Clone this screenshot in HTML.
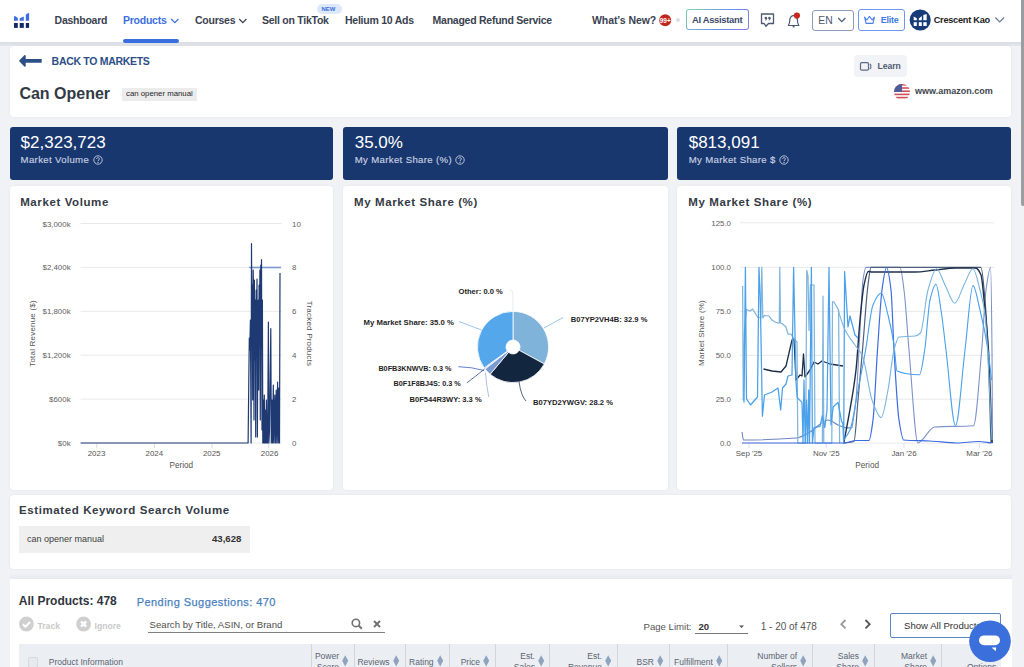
<!DOCTYPE html>
<html><head><meta charset="utf-8">
<style>
*{box-sizing:border-box;margin:0;padding:0}
html,body{width:1024px;height:667px;overflow:hidden;background:#f0f2f6;font-family:"Liberation Sans",sans-serif;color:#333}
.t{position:absolute;white-space:nowrap;line-height:1}
.b{font-weight:bold}
.abs{position:absolute}
.card{position:absolute;background:#fff;border-radius:4px;box-shadow:0 0 3px rgba(0,0,0,0.06)}
.kpi{position:absolute;background:#18376f;border-radius:3px;top:127px;height:52.5px}
.nav{color:#3a4250;font-size:10.5px;font-weight:bold;letter-spacing:-0.25px;top:15px}
.kv{color:#fff;font-size:17px;top:134px}
.kl{color:#c9d1e2;font-size:9.6px;top:155.2px;letter-spacing:0.35px;-webkit-text-stroke:0.15px #c9d1e2}
.ct{color:#353b45;font-size:11.5px;font-weight:bold;top:197.2px;letter-spacing:0.6px}
.ax{color:#666;font-size:7.5px}
.pl{color:#1e1e1e;font-size:7px;font-weight:bold}
.th{color:#5b6370;font-size:8.5px;top:657px}
</style></head><body>

<!-- NAV -->
<div class="abs" style="left:0;top:0;width:1021px;height:42px;background:#fff"></div>
<div class="abs" style="left:0;top:42px;width:1021px;height:4px;background:linear-gradient(#d9dde4,#e4e7ec)"></div>
<div class="abs" style="left:1021px;top:0;width:3px;height:205.5px;background:#9a9da2;border-bottom-left-radius:2px"></div>

<!-- logo -->
<svg class="abs" style="left:0;top:0" width="40" height="40">
<path d="M14 16.2 L15.5 16.2 L17.8 18 L17.8 20.8 L14 20.8Z" fill="#3f6de0"/>
<path d="M19.7 18.3 L23.8 16.4 L23.8 20.8 L19.7 20.8Z" fill="#3f6de0"/>
<path d="M25.8 14.5 L28.4 13 L29.1 13.2 L29.1 20.8 L25.8 20.8Z" fill="#3f6de0"/>
<rect x="14" y="23" width="3.8" height="4.9" fill="#0f2a66"/>
<rect x="19.7" y="23" width="4.1" height="4.9" fill="#0f2a66"/>
<rect x="25.8" y="23" width="3.3" height="4.9" fill="#0f2a66"/>
</svg>

<div class="t nav" style="left:54.6px">Dashboard</div>
<div class="t nav" style="left:123px;color:#3b6fe0">Products</div>
<svg class="abs" style="left:170px;top:17px" width="10" height="8"><path d="M1.2 2 L4.8 5.6 L8.4 2" stroke="#3b6fe0" stroke-width="1.2" fill="none"/></svg>
<div class="abs" style="left:123px;top:39px;width:55.7px;height:3.6px;background:#3b6fe0;border-radius:2px"></div>
<div class="t nav" style="left:195px">Courses</div>
<svg class="abs" style="left:238px;top:17px" width="10" height="8"><path d="M1.2 2 L4.8 5.6 L8.4 2" stroke="#39414e" stroke-width="1.2" fill="none"/></svg>
<div class="t nav" style="left:262px">Sell on TikTok</div>
<div class="abs" style="left:316.7px;top:3.9px;width:25px;height:10.1px;background:#dde9fb;border-radius:5px"></div>
<div class="t b" style="left:321.5px;top:5.6px;font-size:6px;color:#3c6fd8">NEW</div>
<div class="t nav" style="left:345px">Helium 10 Ads</div>
<div class="t nav" style="left:432.6px">Managed Refund Service</div>
<div class="t nav" style="left:592px;letter-spacing:-0.08px">What’s New?</div>
<svg class="abs" style="left:658px;top:13px" width="15" height="15"><circle cx="7.2" cy="7.2" r="6" fill="#c0281e"/><text x="7.2" y="7.4" font-family="Liberation Sans, sans-serif" font-size="7.6" font-weight="bold" fill="#fff" text-anchor="middle" dominant-baseline="central" textLength="11" lengthAdjust="spacingAndGlyphs">99+</text></svg>
<div class="abs" style="left:676.4px;top:18px;width:4px;height:4px;background:#d8dde6;border-radius:50%"></div>
<div class="abs" style="left:686px;top:9.4px;width:62.7px;height:21.1px;border-radius:3px;background:linear-gradient(135deg,#7fd3b0,#6a8cf0 60%,#8a7af0);padding:1px">
  <div style="width:100%;height:100%;background:#fff;border-radius:2px"></div></div>
<div class="t b" style="left:692px;top:14.7px;font-size:9.4px;color:#3b4a6b;letter-spacing:-0.3px">AI Assistant</div>

<!-- chat icon -->
<svg class="abs" style="left:758px;top:11px" width="20" height="20">
<path d="M3.5 3 H15.5 V12.5 H10.5 L8 15.3 L6.2 12.5 H3.5 Z" stroke="#4c5870" stroke-width="1.3" fill="none" stroke-linejoin="round"/>
<circle cx="7.9" cy="7.1" r="1.25" fill="#4c5870"/><circle cx="11.4" cy="7.1" r="1.25" fill="#4c5870"/><path d="M8.9 7.3 L7.6 9.4 M12.4 7.3 L11.1 9.4" stroke="#4c5870" stroke-width="1"/>
</svg>
<!-- bell -->
<svg class="abs" style="left:785px;top:11px" width="18" height="18">
<path d="M3.3 14.5 C4.5 13 4.8 11.5 4.8 9 C4.8 6.3 6.5 4.6 8.6 4.6 C10.7 4.6 12.4 6.3 12.4 9 C12.4 11.5 12.7 13 13.9 14.5 Z" stroke="#4c5870" stroke-width="1.2" fill="none" stroke-linejoin="round"/>
<path d="M7.6 15.7 h2" stroke="#4c5870" stroke-width="1.3"/>
<circle cx="11.9" cy="4.6" r="3.1" fill="#c8281e"/>
</svg>
<!-- EN -->
<div class="abs" style="left:812px;top:9.5px;width:41.7px;height:21.2px;border:1px solid #8e9db6;border-radius:3px"></div>
<div class="t" style="left:818.3px;top:15.5px;font-size:10.3px;color:#4c5870">EN</div>
<svg class="abs" style="left:837px;top:16px" width="10" height="8"><path d="M1.2 2 L4.8 5.6 L8.4 2" stroke="#4c5870" stroke-width="1.2" fill="none"/></svg>
<!-- Elite -->
<div class="abs" style="left:858.4px;top:9.4px;width:46.3px;height:21.6px;border:1px solid #6b97f0;border-radius:3px"></div>
<svg class="abs" style="left:863px;top:13px" width="14" height="14">
<path d="M1.6 4.1 L3.8 7 L6.5 3.4 L9.2 7 L11.4 4.1 L10 10.4 H3 Z" stroke="#4a7fea" stroke-width="1.1" fill="none" stroke-linejoin="round"/>
</svg>
<div class="t b" style="left:880.8px;top:16.4px;font-size:8.8px;color:#3d78e8;letter-spacing:-0.2px">Elite</div>
<!-- avatar -->
<svg class="abs" style="left:909px;top:9px" width="23" height="23">
<circle cx="11.2" cy="10.95" r="10.55" fill="#173a78"/>
<path d="M4.7 7.6 L7.8 9.25 V11.2 H4.7Z M9.8 9.4 L12.8 7.1 V11.2 H9.8Z M14.3 6 L17.7 4.9 V11.2 H14.3Z" fill="#fff"/>
<rect x="4.7" y="13.2" width="3.1" height="3.8" fill="#fff"/><rect x="9.8" y="13.2" width="3" height="3.8" fill="#fff"/><rect x="14.3" y="13.2" width="3.4" height="3.8" fill="#fff"/>
</svg>
<div class="t b" style="left:933.7px;top:16.1px;font-size:9.2px;color:#222;letter-spacing:-0.25px">Crescent Kao</div>
<svg class="abs" style="left:994px;top:15px" width="12" height="9"><path d="M1.3 2.5 L5.7 7 L10.1 2.5" stroke="#6a7890" stroke-width="1.2" fill="none"/></svg>

<!-- HEADER CARD -->
<div class="card" style="left:10px;top:46px;width:1001px;height:70.5px"></div>
<svg class="abs" style="left:16px;top:52px" width="30" height="18">
<path d="M4.0 8.9 L8.9 3.9 L8.9 13.9 Z" fill="#2c4f86" stroke="#2c4f86" stroke-width="1.6" stroke-linejoin="round"/><rect x="8.5" y="6.95" width="17.2" height="3.8" rx="0.6" fill="#2c4f86"/>
</svg>
<div class="t b" style="left:51.6px;top:56px;font-size:10.5px;color:#2c4f86;letter-spacing:-0.3px">BACK TO MARKETS</div>
<div class="t b" style="left:19.4px;top:85.5px;font-size:16px;color:#333a45;letter-spacing:0px;margin-top:0.5px">Can Opener</div>
<div class="abs" style="left:121.7px;top:88px;width:75.8px;height:12.8px;background:#ececec;border-radius:1px"></div>
<div class="t" style="left:126px;top:89.9px;font-size:7.8px;color:#1e1e1e;letter-spacing:0px">can opener manual</div>
<!-- learn -->
<div class="abs" style="left:854px;top:55px;width:52.6px;height:21.6px;background:#f1f3f6;border-radius:4px"></div>
<svg class="abs" style="left:858px;top:60px" width="16" height="12">
<rect x="2.5" y="2.7" width="8" height="7.4" rx="1.2" stroke="#5d6b84" stroke-width="1.2" fill="none"/>
<path d="M11.6 4 C12.6 4 12.8 4.4 12.8 5 V7.8 C12.8 8.4 12.6 8.8 11.6 8.8" stroke="#5d6b84" stroke-width="1.1" fill="none"/>
</svg>
<div class="t b" style="left:877.4px;top:62px;font-size:8.6px;color:#4f5b72">Learn</div>
<!-- flag -->
<svg class="abs" style="left:893px;top:82.5px" width="18" height="18">
<defs><clipPath id="fc"><circle cx="9" cy="9" r="8"/></clipPath></defs>
<g clip-path="url(#fc)">
<rect width="18" height="18" fill="#fff"/>
<rect y="1" width="18" height="1.6" fill="#d0505a"/><rect y="4.2" width="18" height="1.6" fill="#d0505a"/><rect y="7.4" width="18" height="1.6" fill="#d0505a"/><rect y="10.6" width="18" height="1.6" fill="#d0505a"/><rect y="13.8" width="18" height="1.6" fill="#d0505a"/><rect y="17" width="18" height="1.6" fill="#d0505a"/>
<rect width="9" height="9" fill="#505c98"/>
</g></svg>
<div class="t b" style="left:915px;top:87.1px;font-size:9px;color:#41464f;letter-spacing:0px">www.amazon.com</div>

<!-- KPI -->
<div class="kpi" style="left:10px;width:323px"></div>
<div class="kpi" style="left:343px;width:324.5px"></div>
<div class="kpi" style="left:677px;width:334px"></div>
<div class="t kv" style="left:20.6px">$2,323,723</div>
<div class="t kl" style="left:20.6px">Market Volume</div>
<div class="t kv" style="left:354.7px">35.0%</div>
<div class="t kl" style="left:354.7px">My Market Share (%)</div>
<div class="t kv" style="left:688.7px">$813,091</div>
<div class="t kl" style="left:688.7px">My Market Share $</div>
<svg class="abs" style="left:93px;top:154.5px" width="10" height="10"><circle cx="5" cy="5" r="4.2" stroke="#c6cee0" stroke-width="0.9" fill="none"/><path d="M3.6 4 C3.6 2.2 6.4 2.2 6.4 3.9 C6.4 5 5 5 5 6.1" stroke="#c6cee0" stroke-width="0.9" fill="none"/><circle cx="5" cy="7.4" r="0.55" fill="#c6cee0"/></svg><svg class="abs" style="left:455.2px;top:154.5px" width="10" height="10"><circle cx="5" cy="5" r="4.2" stroke="#c6cee0" stroke-width="0.9" fill="none"/><path d="M3.6 4 C3.6 2.2 6.4 2.2 6.4 3.9 C6.4 5 5 5 5 6.1" stroke="#c6cee0" stroke-width="0.9" fill="none"/><circle cx="5" cy="7.4" r="0.55" fill="#c6cee0"/></svg><svg class="abs" style="left:779.4px;top:154.5px" width="10" height="10"><circle cx="5" cy="5" r="4.2" stroke="#c6cee0" stroke-width="0.9" fill="none"/><path d="M3.6 4 C3.6 2.2 6.4 2.2 6.4 3.9 C6.4 5 5 5 5 6.1" stroke="#c6cee0" stroke-width="0.9" fill="none"/><circle cx="5" cy="7.4" r="0.55" fill="#c6cee0"/></svg>

<!-- CHART CARDS -->
<div class="card" style="left:10px;top:186px;width:323px;height:304px"></div>
<div class="card" style="left:343px;top:186px;width:324.5px;height:304px"></div>
<div class="card" style="left:677px;top:186px;width:334px;height:304px"></div>
<div class="t ct" style="left:20.2px">Market Volume</div>
<div class="t ct" style="left:354px">My Market Share (%)</div>
<div class="t ct" style="left:688.3px">My Market Share (%)</div>

<!--CHARTS--><svg class="abs" style="left:0;top:0" width="1024" height="667" font-family="Liberation Sans, sans-serif"><line x1="80.6" x2="281.6" y1="223.5" y2="223.5" stroke="#e9e9e9" stroke-width="1"/><line x1="80.6" x2="281.6" y1="267.4" y2="267.4" stroke="#e9e9e9" stroke-width="1"/><line x1="80.6" x2="281.6" y1="311.3" y2="311.3" stroke="#e9e9e9" stroke-width="1"/><line x1="80.6" x2="281.6" y1="355.2" y2="355.2" stroke="#e9e9e9" stroke-width="1"/><line x1="80.6" x2="281.6" y1="399.1" y2="399.1" stroke="#e9e9e9" stroke-width="1"/><line x1="80.6" x2="281.6" y1="443" y2="443" stroke="#e9e9e9" stroke-width="1"/><line x1="96.8" x2="96.8" y1="443" y2="448" stroke="#d8dce6"/><line x1="154.3" x2="154.3" y1="443" y2="448" stroke="#d8dce6"/><line x1="212" x2="212" y1="443" y2="448" stroke="#d8dce6"/><line x1="268.7" x2="268.7" y1="443" y2="448" stroke="#d8dce6"/><polyline points="249.20,267.50 281.00,267.50" fill="none" stroke="#7b9bd0" stroke-width="1.6" stroke-linejoin="round" opacity="1"/><polyline points="80.60,443.00 248.10,443.00 248.80,380.00 249.30,338.00 249.80,350.00 250.40,320.00 251.10,443.00 251.50,243.60 251.90,330.00 252.30,285.00 252.70,400.00 253.20,270.00 253.60,300.00 254.00,420.00 254.40,280.00 254.90,360.00 255.30,300.00 255.70,437.00 256.20,290.00 256.60,350.00 257.00,279.00 257.40,437.00 257.80,330.00 258.30,300.00 258.70,390.00 259.10,285.00 259.50,340.00 259.90,270.00 260.30,420.00 260.80,265.00 261.20,300.00 261.50,259.60 262.00,430.00 262.40,300.00 262.80,443.00 263.30,400.00 263.80,443.00 264.30,395.00 264.80,443.00 265.30,410.00 265.80,443.00 266.40,400.00 266.90,443.00 267.60,443.00 268.40,322.00 268.90,443.00 269.50,430.00 270.80,328.50 271.30,443.00 272.00,400.00 272.60,443.00 273.30,385.00 273.90,443.00 274.80,395.00 275.40,443.00 276.20,390.00 276.80,443.00 277.60,382.00 278.20,443.00 278.90,388.00 279.50,443.00 280.00,273.00" fill="none" stroke="#1f3a73" stroke-width="1.2" stroke-linejoin="round" opacity="1"/><path d="M513.00,311.40 A35.6,35.6 0 0 1 544.30,363.95 L519.16,350.33 A7,7 0 0 0 513.00,340.00Z" fill="#7fb3d9" stroke="#fff" stroke-width="0.8"/><path d="M544.30,363.95 A35.6,35.6 0 0 1 490.14,374.29 L508.50,352.37 A7,7 0 0 0 519.16,350.33Z" fill="#12263f" stroke="#fff" stroke-width="0.8"/><path d="M490.14,374.29 A35.6,35.6 0 0 1 485.01,369.00 L507.50,351.33 A7,7 0 0 0 508.50,352.37Z" fill="#7d9bd3" stroke="#fff" stroke-width="0.8"/><path d="M485.01,369.00 A35.6,35.6 0 0 1 484.60,368.46 L507.42,351.22 A7,7 0 0 0 507.50,351.33Z" fill="#4a6fc0" stroke="#fff" stroke-width="0.8"/><path d="M484.60,368.46 A35.6,35.6 0 0 1 484.20,367.93 L507.34,351.11 A7,7 0 0 0 507.42,351.22Z" fill="#2f57a8" stroke="#fff" stroke-width="0.8"/><path d="M484.20,367.93 A35.6,35.6 0 0 1 513.00,311.40 L513.00,340.00 A7,7 0 0 0 507.34,351.11Z" fill="#55a7ec" stroke="#fff" stroke-width="0.8"/><path d="M513,311 L513,294 Q513,290 510,290" stroke="#e2e6ec" stroke-width="0.8" fill="none"/><path d="M481.5,330 L459,321.5" stroke="#7fb6ea" stroke-width="0.8" fill="none"/><path d="M544,328 L563,317.5" stroke="#7fb6dc" stroke-width="0.8" fill="none"/><path d="M458.3,366.7 Q472,367 484,370.5" stroke="#3a63c0" stroke-width="0.8" fill="none"/><path d="M466.9,382.8 Q476,376 484.5,369" stroke="#2f4f90" stroke-width="0.8" fill="none"/><path d="M488.8,397.2 Q486,383 485.5,372.5" stroke="#9ab0dc" stroke-width="0.8" fill="none"/><path d="M519,381.5 Q521,396 526,401" stroke="#2a3f5e" stroke-width="0.8" fill="none"/><line x1="740" x2="994" y1="222.8" y2="222.8" stroke="#e9e9e9" stroke-width="1"/><line x1="740" x2="994" y1="267.3" y2="267.3" stroke="#e9e9e9" stroke-width="1"/><line x1="740" x2="994" y1="311.4" y2="311.4" stroke="#e9e9e9" stroke-width="1"/><line x1="740" x2="994" y1="355.3" y2="355.3" stroke="#e9e9e9" stroke-width="1"/><line x1="740" x2="994" y1="399.2" y2="399.2" stroke="#e9e9e9" stroke-width="1"/><line x1="740" x2="994" y1="443.2" y2="443.2" stroke="#e9e9e9" stroke-width="1"/><line x1="749" x2="749" y1="443" y2="448" stroke="#dde"/><line x1="826.3" x2="826.3" y1="443" y2="448" stroke="#dde"/><line x1="904" x2="904" y1="443" y2="448" stroke="#dde"/><line x1="979.4" x2="979.4" y1="443" y2="448" stroke="#dde"/><path d="M742.00,432.00 C742.50,434.67 743.00,440.00 743.50,440.00 C761.00,440.00 778.50,439.46 796.00,438.00 C800.67,437.61 805.33,434.41 810.00,432.00 C816.00,428.90 822.00,420.00 828.00,420.00 C831.33,420.00 834.67,423.59 838.00,425.00 C840.33,425.99 842.67,427.37 845.00,427.60 C847.33,427.83 849.67,427.87 852.00,428.00" fill="none" stroke="#6d87c0" stroke-width="1.1" opacity="1" stroke-linejoin="round"/><path d="M852.00,428.00 C853.33,418.67 854.67,413.33 856.00,400.00 C857.33,386.67 858.67,352.74 860.00,330.00 C861.00,312.95 862.00,286.71 863.00,280.00 C864.00,273.29 865.00,267.40 866.00,267.40 C877.33,267.40 888.67,267.40 900.00,267.40 C901.33,267.40 902.67,279.89 904.00,290.00 C905.67,302.64 907.33,331.36 909.00,350.00 C912.00,383.55 915.00,443.00 918.00,443.00 C919.33,443.00 920.67,441.13 922.00,440.00 C926.17,436.47 930.33,427.32 934.50,427.00 C947.50,426.00 960.50,426.80 973.50,425.70 C976.23,425.47 978.97,381.03 981.70,350.00 C983.13,333.73 984.57,300.47 986.00,290.00 C987.53,278.80 989.07,267.40 990.60,267.40 C991.07,267.40 991.53,304.47 992.00,350.00 C992.17,366.26 992.33,412.00 992.50,443.00" fill="none" stroke="#7d93c8" stroke-width="1.1" opacity="1" stroke-linejoin="round"/><path d="M843.00,443.00 C846.67,442.50 850.33,442.66 854.00,441.50 C855.33,441.08 856.67,414.30 858.00,400.00 C859.50,383.92 861.00,367.16 862.50,350.00 C864.33,329.02 866.17,298.92 868.00,285.00 C869.00,277.41 870.00,267.40 871.00,267.40 C907.67,267.40 944.33,267.40 981.00,267.40 C982.33,267.40 983.67,285.16 985.00,300.00 C986.00,311.13 987.00,328.32 988.00,350.00 C989.00,371.68 990.00,412.00 991.00,443.00" fill="none" stroke="#4d5f7e" stroke-width="1.2" opacity="1" stroke-linejoin="round"/><path d="M843.80,443.00 C845.20,435.47 846.60,428.46 848.00,420.40 C850.67,405.05 853.33,393.19 856.00,370.00 C857.33,358.40 858.67,333.73 860.00,320.00 C861.33,306.27 862.67,291.20 864.00,285.00 C865.43,278.34 866.87,271.50 868.30,271.50 C869.53,271.50 870.77,272.00 872.00,272.00 C886.33,272.00 900.67,272.00 915.00,272.00 C921.67,272.00 928.33,270.66 935.00,270.00 C941.83,269.33 948.67,268.00 955.50,268.00 C962.23,268.00 968.97,268.00 975.70,268.00 C977.47,268.00 979.23,270.80 981.00,275.00 C982.33,278.17 983.67,296.75 985.00,310.00 C986.17,321.60 987.33,331.35 988.50,350.00 C989.67,368.65 990.83,412.00 992.00,443.00" fill="none" stroke="#1e3049" stroke-width="1.4" opacity="1" stroke-linejoin="round"/><polyline points="763.50,369.00 772.00,371.00 781.00,372.00 786.00,366.00 792.00,340.00 794.00,339.00 796.00,380.00 800.00,375.00 802.00,376.00 803.50,354.00 805.00,377.00 810.00,370.00 814.00,362.00 818.00,364.00 822.00,361.00 830.00,364.00 843.00,366.00" fill="none" stroke="#1b2d48" stroke-width="1.3" stroke-linejoin="round" opacity="1"/><polyline points="742.60,286.00 743.30,400.00 744.50,330.00 746.50,309.50 750.00,311.00 752.50,309.00 757.60,317.00 760.80,318.00 761.80,267.40 762.80,318.00 764.50,315.50 769.00,316.00 772.00,320.00 775.00,322.00 778.00,323.00 779.30,323.00 779.80,267.40 780.50,323.00 782.00,323.50 786.00,327.00 788.00,334.00 791.00,334.00 794.00,339.00 797.00,342.00 797.80,443.00 805.60,443.00 806.80,270.40 808.00,276.00 809.00,330.40 810.40,284.80 814.00,285.00 815.00,443.00 822.40,443.00 823.00,296.20 823.80,443.00 831.80,443.00 832.50,301.60 834.00,302.00 838.60,310.00 839.60,443.00" fill="none" stroke="#7fb5de" stroke-width="1.25" stroke-linejoin="round" opacity="1"/><polyline points="744.00,402.50 745.40,267.40 746.50,398.80 750.50,405.00 754.00,401.00 757.50,397.00 759.00,267.40 760.30,300.00 762.40,416.20 764.50,395.00 772.00,392.00 778.00,388.00 780.70,410.00 782.50,388.00 786.00,384.00 788.00,376.00 792.00,375.00 793.60,267.40 796.00,382.00 797.20,397.60 802.00,402.40 803.00,443.00 804.00,380.00 805.20,443.00 806.50,400.00 807.60,443.00 808.70,390.00 809.50,443.00 811.40,267.40 812.40,443.00 814.00,427.60 820.00,426.40 822.40,415.60 824.80,427.60 827.00,410.00 829.00,267.40 831.00,425.00 833.20,407.00 838.00,402.40 841.60,421.60 842.80,423.00 843.70,443.00 844.60,271.60 848.00,327.00 850.00,316.00 855.00,335.00 858.00,338.00" fill="none" stroke="#4aa0ea" stroke-width="1.25" stroke-linejoin="round" opacity="1"/><path d="M742.00,443.00 C776.00,443.00 810.00,443.00 844.00,443.00 C848.00,443.00 852.00,440.50 856.00,440.50 C860.33,440.50 864.67,440.50 869.00,440.50 C870.33,440.50 871.67,430.18 873.00,420.00 C874.50,408.55 876.00,371.54 877.50,350.00 C879.00,328.46 880.50,300.91 882.00,290.00 C883.50,279.09 885.00,267.50 886.50,267.50 C888.00,267.50 889.50,277.50 891.00,290.00 C892.00,298.33 893.00,333.28 894.00,350.00 C895.67,377.86 897.33,409.18 899.00,420.00 C900.57,430.17 902.13,439.85 903.70,440.00 C912.47,440.86 921.23,440.56 930.00,441.00 C939.00,441.45 948.00,443.00 957.00,443.00 C964.00,443.00 971.00,441.50 978.00,441.50 C982.50,441.50 987.00,442.50 991.50,443.00" fill="none" stroke="#3c6be0" stroke-width="1.2" opacity="1" stroke-linejoin="round"/><path d="M843.70,440.00 C845.80,436.67 847.90,434.96 850.00,430.00 C852.67,423.70 855.33,403.68 858.00,390.00 C860.53,377.01 863.07,364.30 865.60,350.00 C868.07,336.08 870.53,310.88 873.00,305.00 C875.73,298.48 878.47,293.00 881.20,293.00 C883.47,293.00 885.73,306.06 888.00,315.00 C890.00,322.89 892.00,331.93 894.00,345.00 C895.00,351.54 896.00,370.57 897.00,371.00 C904.50,374.21 912.00,374.70 919.50,374.70 C921.23,374.70 922.97,360.94 924.70,350.00 C926.47,338.85 928.23,307.32 930.00,300.00 C932.00,291.71 934.00,284.30 936.00,284.30 C937.67,284.30 939.33,299.57 941.00,310.00 C942.67,320.43 944.33,336.69 946.00,350.00 C949.17,375.29 952.33,425.70 955.50,425.70 C958.67,425.70 961.83,375.37 965.00,350.00 C967.67,328.64 970.33,285.60 973.00,285.60 C975.33,285.60 977.67,300.45 980.00,310.00 C982.67,320.91 985.33,332.56 988.00,350.00 C989.17,357.63 990.33,370.00 991.50,380.00" fill="none" stroke="#4aa0ea" stroke-width="1.1" opacity="1" stroke-linejoin="round"/><path d="M838.00,310.00 C840.33,316.67 842.67,325.32 845.00,330.00 C848.33,336.68 851.67,340.06 855.00,345.00 C857.50,348.71 860.00,350.54 862.50,356.00 C865.67,362.91 868.83,391.48 872.00,400.00 C875.07,408.25 878.13,417.50 881.20,417.50 C883.47,417.50 885.73,401.47 888.00,390.00 C890.00,379.88 892.00,357.38 894.00,350.00 C895.67,343.85 897.33,337.24 899.00,337.00 C904.33,336.22 909.67,336.69 915.00,336.00 C916.80,335.77 918.60,334.74 920.40,333.00 C922.93,330.55 925.47,298.77 928.00,290.00 C930.87,280.08 933.73,268.80 936.60,268.80 C939.40,268.80 942.20,279.70 945.00,285.00 C948.27,291.18 951.53,303.20 954.80,303.20 C957.87,303.20 960.93,290.78 964.00,285.00 C967.00,279.35 970.00,268.80 973.00,268.80 C975.33,268.80 977.67,281.22 980.00,290.00 C981.67,296.27 983.33,301.76 985.00,314.00 C987.33,331.13 989.67,398.00 992.00,440.00" fill="none" stroke="#7ab5e0" stroke-width="1.1" opacity="1" stroke-linejoin="round"/><text x="70.6" y="224.0" font-size="7.9" fill="#606060" text-anchor="end" dominant-baseline="central" font-weight="normal" >$3,000k</text><text x="70.6" y="267.9" font-size="7.9" fill="#606060" text-anchor="end" dominant-baseline="central" font-weight="normal" >$2,400k</text><text x="70.6" y="311.8" font-size="7.9" fill="#606060" text-anchor="end" dominant-baseline="central" font-weight="normal" >$1,800k</text><text x="70.6" y="355.7" font-size="7.9" fill="#606060" text-anchor="end" dominant-baseline="central" font-weight="normal" >$1,200k</text><text x="70.6" y="399.6" font-size="7.9" fill="#606060" text-anchor="end" dominant-baseline="central" font-weight="normal" >$600k</text><text x="70.6" y="443.5" font-size="7.9" fill="#606060" text-anchor="end" dominant-baseline="central" font-weight="normal" >$0k</text><text x="292" y="224.0" font-size="7.9" fill="#606060" text-anchor="start" dominant-baseline="central" font-weight="normal" >10</text><text x="292" y="267.9" font-size="7.9" fill="#606060" text-anchor="start" dominant-baseline="central" font-weight="normal" >8</text><text x="292" y="311.8" font-size="7.9" fill="#606060" text-anchor="start" dominant-baseline="central" font-weight="normal" >6</text><text x="292" y="355.7" font-size="7.9" fill="#606060" text-anchor="start" dominant-baseline="central" font-weight="normal" >4</text><text x="292" y="399.6" font-size="7.9" fill="#606060" text-anchor="start" dominant-baseline="central" font-weight="normal" >2</text><text x="292" y="443.5" font-size="7.9" fill="#606060" text-anchor="start" dominant-baseline="central" font-weight="normal" >0</text><text x="96.5" y="453.8" font-size="7.9" fill="#555" text-anchor="middle" dominant-baseline="central" font-weight="normal" >2023</text><text x="154.3" y="453.8" font-size="7.9" fill="#555" text-anchor="middle" dominant-baseline="central" font-weight="normal" >2024</text><text x="211.7" y="453.8" font-size="7.9" fill="#555" text-anchor="middle" dominant-baseline="central" font-weight="normal" >2025</text><text x="269.6" y="453.8" font-size="7.9" fill="#555" text-anchor="middle" dominant-baseline="central" font-weight="normal" >2026</text><text x="181.3" y="465.6" font-size="8.2" fill="#555" text-anchor="middle" dominant-baseline="central" font-weight="normal" >Period</text><text x="0" y="0" font-size="8" fill="#555" letter-spacing="0.2" text-anchor="middle" dominant-baseline="central" transform="translate(32.6,333.5) rotate(-90)">Total Revenue ($)</text><text x="0" y="0" font-size="8" fill="#555" letter-spacing="0.2" text-anchor="middle" dominant-baseline="central" transform="translate(309.6,333.5) rotate(90)">Tracked Products</text><text x="502.8" y="291.8" font-size="7.6" fill="#1e1e1e" text-anchor="end" dominant-baseline="central" font-weight="bold"  textLength="44.3" lengthAdjust="spacingAndGlyphs">Other: 0.0 %</text><text x="453.8" y="322.4" font-size="7.6" fill="#1e1e1e" text-anchor="end" dominant-baseline="central" font-weight="bold"  textLength="90.2" lengthAdjust="spacingAndGlyphs">My Market Share: 35.0 %</text><text x="570.8" y="319.8" font-size="7.6" fill="#1e1e1e" text-anchor="start" dominant-baseline="central" font-weight="bold"  textLength="76.6" lengthAdjust="spacingAndGlyphs">B07YP2VH4B: 32.9 %</text><text x="451.5" y="368.2" font-size="7.6" fill="#1e1e1e" text-anchor="end" dominant-baseline="central" font-weight="bold"  textLength="73.1" lengthAdjust="spacingAndGlyphs">B0FB3KNWVB: 0.3 %</text><text x="460.7" y="383.2" font-size="7.6" fill="#1e1e1e" text-anchor="end" dominant-baseline="central" font-weight="bold"  textLength="67.1" lengthAdjust="spacingAndGlyphs">B0F1F8BJ4S: 0.3 %</text><text x="481.6" y="399.2" font-size="7.6" fill="#1e1e1e" text-anchor="end" dominant-baseline="central" font-weight="bold"  textLength="72.1" lengthAdjust="spacingAndGlyphs">B0F544R3WY: 3.3 %</text><text x="532.9" y="402.5" font-size="7.6" fill="#1e1e1e" text-anchor="start" dominant-baseline="central" font-weight="bold"  textLength="80.1" lengthAdjust="spacingAndGlyphs">B07YD2YWGV: 28.2 %</text><text x="731" y="223.3" font-size="7.9" fill="#606060" text-anchor="end" dominant-baseline="central" font-weight="normal" >125.0</text><text x="731" y="267.8" font-size="7.9" fill="#606060" text-anchor="end" dominant-baseline="central" font-weight="normal" >100.0</text><text x="731" y="311.9" font-size="7.9" fill="#606060" text-anchor="end" dominant-baseline="central" font-weight="normal" >75.0</text><text x="731" y="355.8" font-size="7.9" fill="#606060" text-anchor="end" dominant-baseline="central" font-weight="normal" >50.0</text><text x="731" y="399.7" font-size="7.9" fill="#606060" text-anchor="end" dominant-baseline="central" font-weight="normal" >25.0</text><text x="731" y="443.7" font-size="7.9" fill="#606060" text-anchor="end" dominant-baseline="central" font-weight="normal" >0.0</text><text x="749" y="453.8" font-size="7.9" fill="#555" text-anchor="middle" dominant-baseline="central" font-weight="normal" >Sep '25</text><text x="826.3" y="453.8" font-size="7.9" fill="#555" text-anchor="middle" dominant-baseline="central" font-weight="normal" >Nov '25</text><text x="904" y="453.8" font-size="7.9" fill="#555" text-anchor="middle" dominant-baseline="central" font-weight="normal" >Jan '26</text><text x="979.4" y="453.8" font-size="7.9" fill="#555" text-anchor="middle" dominant-baseline="central" font-weight="normal" >Mar '26</text><text x="867.2" y="465.4" font-size="8.2" fill="#555" text-anchor="middle" dominant-baseline="central" font-weight="normal" >Period</text><text x="0" y="0" font-size="8" fill="#555" letter-spacing="0.2" text-anchor="middle" dominant-baseline="central" transform="translate(701.7,333) rotate(-90)">Market Share (%)</text></svg><!--/CHARTS-->
<!-- KEYWORD CARD -->
<div class="card" style="left:10px;top:495px;width:1001px;height:73.5px"></div>
<div class="t ct" style="left:19px;top:504.6px">Estimated Keyword Search Volume</div>
<div class="abs" style="left:19px;top:526.4px;width:231px;height:26.6px;background:#efefef"></div>
<div class="t" style="left:27px;top:535.2px;font-size:9px;color:#3d3d3d">can opener manual</div>
<div class="t b" style="left:212px;top:534px;font-size:9.6px;color:#333">43,628</div>

<!-- PRODUCTS CARD -->
<div class="abs" style="left:9.5px;top:573px;width:1002px;height:6px;background:linear-gradient(rgba(0,0,0,0),rgba(30,40,60,0.045))"></div>
<div class="abs" style="left:9.5px;top:579px;width:1002px;height:100px;background:#fff"></div>
<div class="t b" style="left:18.75px;top:595px;font-size:12px;color:#30353d">All Products: 478</div>
<div class="t" style="left:136.7px;top:596.5px;font-size:11px;color:#4a7fc0;letter-spacing:0.45px;-webkit-text-stroke:0.25px #4a7fc0">Pending Suggestions: 470</div>


<!-- track / ignore -->
<svg class="abs" style="left:18px;top:616px" width="18" height="18"><circle cx="8.4" cy="8" r="7.4" fill="#cfcfcf"/><path d="M4.9 8.2 L7.5 10.8 L12 6" stroke="#fff" stroke-width="2" fill="none"/></svg>
<div class="t b" style="left:37.5px;top:621.8px;font-size:8.6px;color:#c9c9c9">Track</div>
<svg class="abs" style="left:75px;top:616px" width="18" height="18"><circle cx="8.6" cy="8" r="7.4" fill="#cfcfcf"/><path d="M6 5.4 L11.2 10.6 M11.2 5.4 L6 10.6" stroke="#fff" stroke-width="2.4" fill="none"/></svg>
<div class="t b" style="left:94.5px;top:621.8px;font-size:8.6px;color:#c9c9c9">Ignore</div>
<div class="t" style="left:149.6px;top:619.5px;font-size:9.6px;color:#4d4d4d">Search by Title, ASIN, or Brand</div>
<div class="abs" style="left:147.7px;top:632px;width:237px;height:1px;background:#808080"></div>
<svg class="abs" style="left:350px;top:617px" width="14" height="14"><circle cx="5.9" cy="5.9" r="3.7" stroke="#707070" stroke-width="1.6" fill="none"/><path d="M8.6 8.6 L11.8 11.8" stroke="#707070" stroke-width="2"/></svg>
<svg class="abs" style="left:372px;top:619px" width="10" height="10"><path d="M2 2 L8 8 M8 2 L2 8" stroke="#707070" stroke-width="1.9"/></svg>
<!-- pagination -->
<div class="t" style="left:643.5px;top:622px;font-size:9.6px;color:#555">Page Limit:</div>
<div class="t b" style="left:698.5px;top:622px;font-size:9.6px;color:#333">20</div>
<svg class="abs" style="left:738px;top:624px" width="8" height="6"><path d="M1 1.5 H6 L3.5 4Z" fill="#555"/></svg>
<div class="abs" style="left:695px;top:633px;width:52.5px;height:1px;background:#777"></div>
<div class="t" style="left:760.7px;top:622px;font-size:10px;color:#555">1 - 20 of 478</div>
<svg class="abs" style="left:836px;top:617px" width="14" height="14"><path d="M9.5 3 L5.3 7.2 L9.5 11.4" stroke="#999" stroke-width="1.8" fill="none"/></svg>
<svg class="abs" style="left:861px;top:617px" width="14" height="14"><path d="M4.5 3 L8.7 7.2 L4.5 11.4" stroke="#555" stroke-width="1.8" fill="none"/></svg>
<div class="abs" style="left:890px;top:613.3px;width:111.3px;height:24.4px;border:1px solid #5b87c5;border-radius:2px;background:#fff"></div>
<div class="t" style="left:904px;top:620.7px;font-size:9.6px;color:#333">Show All Products</div>
<!-- table header -->
<div class="abs" style="left:18.75px;top:644.3px;width:982.5px;height:30px;background:#ebeff4"></div>
<div class="abs" style="left:28px;top:656.7px;width:10px;height:11px;border:1px solid #d6dade;border-radius:2px;background:#e7eaee"></div>
<div class="t th" style="left:48.8px;top:658px">Product Information</div>
<div class="abs" style="left:310.5px;top:644.3px;width:1px;height:30px;background:#d2d6dc"></div>
<div class="abs" style="left:353.6px;top:644.3px;width:1px;height:30px;background:#d2d6dc"></div>
<div class="abs" style="left:404.6px;top:644.3px;width:1px;height:30px;background:#d2d6dc"></div>
<div class="abs" style="left:448.5px;top:644.3px;width:1px;height:30px;background:#d2d6dc"></div>
<div class="abs" style="left:494.6px;top:644.3px;width:1px;height:30px;background:#d2d6dc"></div>
<div class="abs" style="left:549.4px;top:644.3px;width:1px;height:30px;background:#d2d6dc"></div>
<div class="abs" style="left:616.8px;top:644.3px;width:1px;height:30px;background:#d2d6dc"></div>
<div class="abs" style="left:668.5px;top:644.3px;width:1px;height:30px;background:#d2d6dc"></div>
<div class="abs" style="left:727.4px;top:644.3px;width:1px;height:30px;background:#d2d6dc"></div>
<div class="abs" style="left:811.5px;top:644.3px;width:1px;height:30px;background:#d2d6dc"></div>
<div class="abs" style="left:873.6px;top:644.3px;width:1px;height:30px;background:#d2d6dc"></div>
<div class="abs" style="left:941.4px;top:644.3px;width:1px;height:30px;background:#d2d6dc"></div>
<div class="t th" style="right:685px;top:651px;text-align:right;line-height:11px">Power<br>Score</div>
<svg class="abs" style="left:342px;top:655px" width="7" height="12"><path d="M3.2 0.3 L6.2 5.8 L3.2 11.5 L0.2 5.8Z" fill="#8fa3bd"/></svg>
<div class="t th" style="right:634.4px;top:658px">Reviews</div>
<svg class="abs" style="left:392.5px;top:655px" width="7" height="12"><path d="M3.2 0.3 L6.2 5.8 L3.2 11.5 L0.2 5.8Z" fill="#8fa3bd"/></svg>
<div class="t th" style="right:590.4px;top:658px">Rating</div>
<svg class="abs" style="left:436.5px;top:655px" width="7" height="12"><path d="M3.2 0.3 L6.2 5.8 L3.2 11.5 L0.2 5.8Z" fill="#8fa3bd"/></svg>
<div class="t th" style="right:544px;top:658px">Price</div>
<svg class="abs" style="left:483px;top:655px" width="7" height="12"><path d="M3.2 0.3 L6.2 5.8 L3.2 11.5 L0.2 5.8Z" fill="#8fa3bd"/></svg>
<div class="t th" style="right:489px;top:651px;text-align:right;line-height:11px">Est.<br>Sales</div>
<svg class="abs" style="left:538px;top:655px" width="7" height="12"><path d="M3.2 0.3 L6.2 5.8 L3.2 11.5 L0.2 5.8Z" fill="#8fa3bd"/></svg>
<div class="t th" style="right:422px;top:651px;text-align:right;line-height:11px">Est.<br>Revenue</div>
<svg class="abs" style="left:605px;top:655px" width="7" height="12"><path d="M3.2 0.3 L6.2 5.8 L3.2 11.5 L0.2 5.8Z" fill="#8fa3bd"/></svg>
<div class="t th" style="right:370px;top:658px">BSR</div>
<svg class="abs" style="left:657px;top:655px" width="7" height="12"><path d="M3.2 0.3 L6.2 5.8 L3.2 11.5 L0.2 5.8Z" fill="#8fa3bd"/></svg>
<div class="t th" style="right:311.20000000000005px;top:658px">Fulfillment</div>
<svg class="abs" style="left:716px;top:655px" width="7" height="12"><path d="M3.2 0.3 L6.2 5.8 L3.2 11.5 L0.2 5.8Z" fill="#8fa3bd"/></svg>
<div class="t th" style="right:227px;top:651px;text-align:right;line-height:11px">Number of<br>Sellers</div>
<svg class="abs" style="left:800px;top:655px" width="7" height="12"><path d="M3.2 0.3 L6.2 5.8 L3.2 11.5 L0.2 5.8Z" fill="#8fa3bd"/></svg>
<div class="t th" style="right:165px;top:651px;text-align:right;line-height:11px">Sales<br>Share</div>
<svg class="abs" style="left:862px;top:655px" width="7" height="12"><path d="M3.2 0.3 L6.2 5.8 L3.2 11.5 L0.2 5.8Z" fill="#8fa3bd"/></svg>
<div class="t th" style="right:97px;top:651px;text-align:right;line-height:11px">Market<br>Share</div>
<svg class="abs" style="left:930px;top:655px" width="7" height="12"><path d="M3.2 0.3 L6.2 5.8 L3.2 11.5 L0.2 5.8Z" fill="#8fa3bd"/></svg>
<div class="t th" style="left:967px;top:663px">Options</div>

<!-- chat bubble -->
<svg class="abs" style="left:968px;top:620px" width="44" height="44">
<circle cx="22" cy="21.3" r="20.8" fill="#3a6fdc"/>
<rect x="11" y="15.4" width="21" height="9.8" rx="4.9" fill="#fff"/>
<path d="M23.6 27.6 L28.2 27.6 L27.8 31.2Z" fill="#fff"/>
</svg>
</body></html>
